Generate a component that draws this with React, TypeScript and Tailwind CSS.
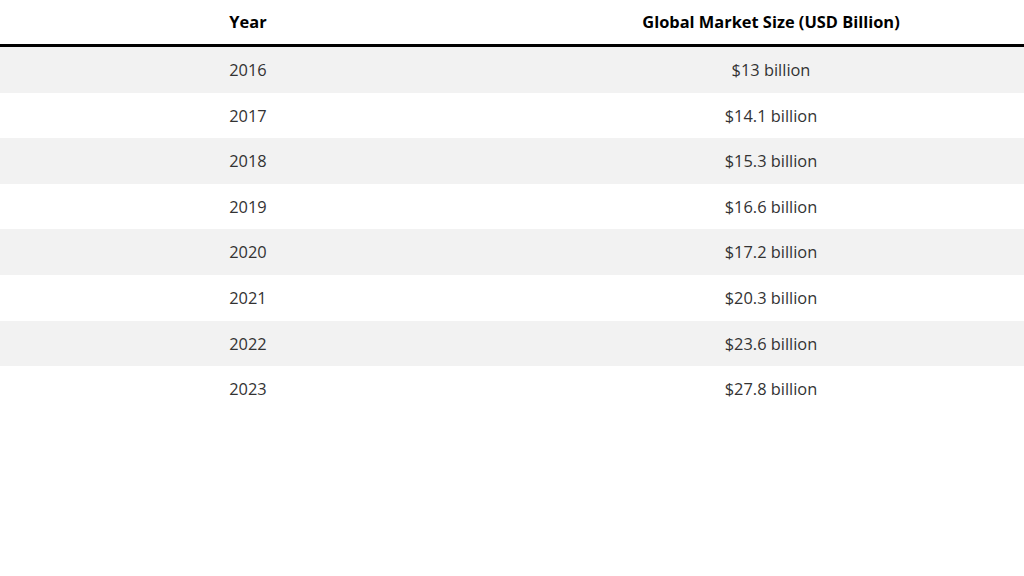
const rows = [
  ['2016', '$13 billion'],
  ['2017', '$14.1 billion'],
  ['2018', '$15.3 billion'],
  ['2019', '$16.6 billion'],
  ['2020', '$17.2 billion'],
  ['2021', '$20.3 billion'],
  ['2022', '$23.6 billion'],
  ['2023', '$27.8 billion'],
];

export default function App() {
  return (
    <div className="w-[1024px] h-[576px] bg-white text-[16.4px] text-[#333]" style={{ fontFamily: '"Open Sans", sans-serif' }}>
      <div className="flex h-[47px] border-b-[3px] border-black font-bold text-black items-center">
        <div className="w-[496px] text-center">Year</div>
        <div className="flex-1 pl-[22px] text-center">Global Market Size (USD Billion)</div>
      </div>
      {rows.map(([y, v], i) => (
        <div key={y} className={`flex h-[45.6px] items-center pt-[1px] ${i % 2 === 0 ? 'bg-[#f2f2f2]' : 'bg-white'}`}>
          <div className="w-[496px] text-center">{y}</div>
          <div className="flex-1 pl-[22px] text-center">{v}</div>
        </div>
      ))}
    </div>
  );
}
